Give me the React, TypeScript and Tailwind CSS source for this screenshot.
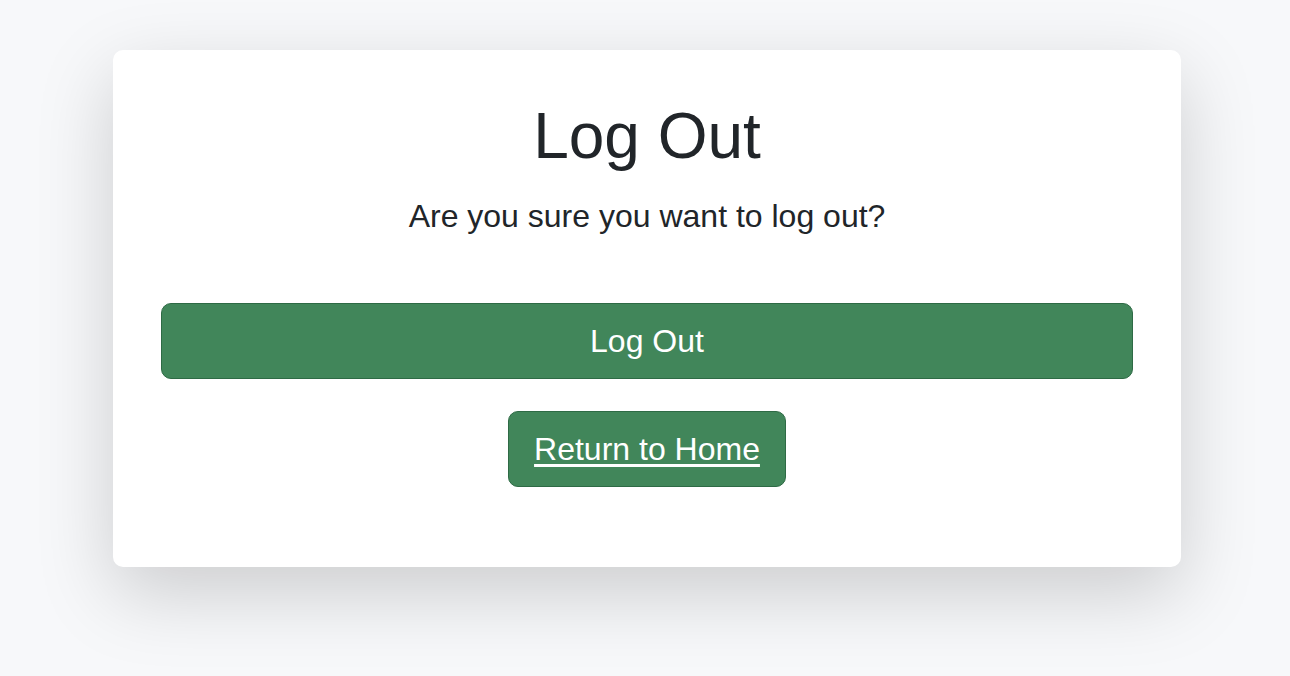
export default function App() {
  return (
    <div className="min-h-[676px] bg-[#f7f8fa] pt-[50px] font-['Liberation_Sans',Arial,sans-serif] text-[#212529]">
      <div className="ml-[113px] w-[1068px] rounded-[10px] bg-white px-[48px] pt-[48px] pb-[80px] text-center shadow-[0_26px_77px_rgba(0,0,0,0.175)]">
        <h1 className="text-[64px] leading-[1.2]">Log Out</h1>
        <p className="mt-[17px] text-[32px] leading-[1.5]">Are you sure you want to log out?</p>
        <form className="mt-[63px]" onSubmit={(e) => e.preventDefault()}>
          <button
            type="submit"
            className="block w-full rounded-[10px] border border-[#2e6a45] bg-[#41865a] py-[13px] text-[32px] leading-[1.5] text-white"
          >
            Log Out
          </button>
        </form>
        <div className="mt-[32px] flex justify-center">
          <a
            href="#"
            className="rounded-[10px] border border-[#2e6a45] bg-[#41865a] px-[25px] py-[13px] text-[32px] leading-[1.5] text-white underline underline-offset-[4px]"
          >
            Return to Home
          </a>
        </div>
      </div>
    </div>
  );
}
